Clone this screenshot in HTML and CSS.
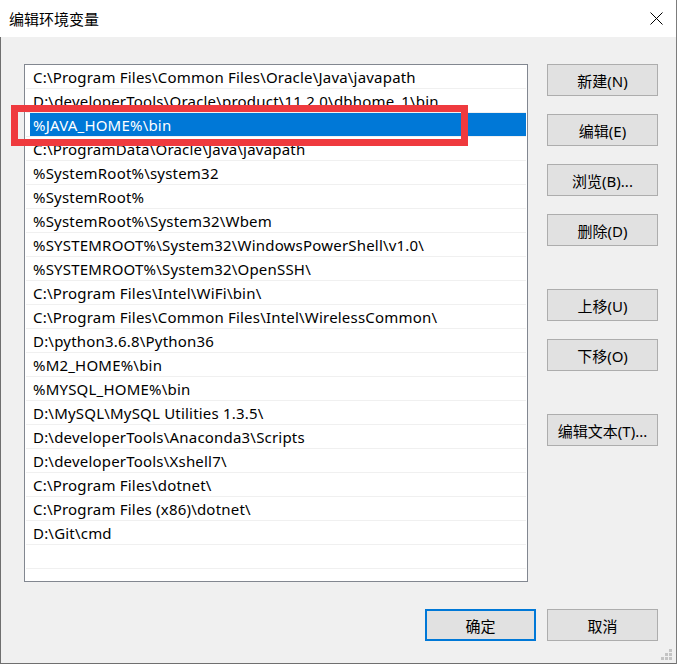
FILE: index.html
```html
<!DOCTYPE html>
<html lang="zh-CN">
<head>
    <meta charset="UTF-8">
    <meta name="viewport" content="width=device-width, initial-scale=1.0">
    <title>编辑环境变量</title>
    <link rel="stylesheet" href="styles.css">
</head>
<body>
    <div class="window">
        <div class="titlebar">
            <span class="title">编辑环境变量</span>
            <svg class="close" width="13" height="13" viewBox="0 0 13 13">
                <path d="M0.5 0.5 L12.5 12.5 M12.5 0.5 L0.5 12.5" stroke="#000" stroke-width="1" fill="none"/>
            </svg>
        </div>
        <div class="client">
            <div class="main">
                <div class="path-list">
                    <div class="row"><span class="label">C:\Program Files\Common Files\Oracle\Java\javapath</span></div>
                    <div class="row"><span class="label">D:\developerTools\Oracle\product\11.2.0\dbhome_1\bin</span></div>
                    <div class="row selected"><span class="label">%JAVA_HOME%\bin</span></div>
                    <div class="row"><span class="label">C:\ProgramData\Oracle\Java\javapath</span></div>
                    <div class="row"><span class="label">%SystemRoot%\system32</span></div>
                    <div class="row"><span class="label">%SystemRoot%</span></div>
                    <div class="row"><span class="label">%SystemRoot%\System32\Wbem</span></div>
                    <div class="row"><span class="label">%SYSTEMROOT%\System32\WindowsPowerShell\v1.0\</span></div>
                    <div class="row"><span class="label">%SYSTEMROOT%\System32\OpenSSH\</span></div>
                    <div class="row"><span class="label">C:\Program Files\Intel\WiFi\bin\</span></div>
                    <div class="row"><span class="label">C:\Program Files\Common Files\Intel\WirelessCommon\</span></div>
                    <div class="row"><span class="label">D:\python3.6.8\Python36</span></div>
                    <div class="row"><span class="label">%M2_HOME%\bin</span></div>
                    <div class="row"><span class="label">%MYSQL_HOME%\bin</span></div>
                    <div class="row"><span class="label">D:\MySQL\MySQL Utilities 1.3.5\</span></div>
                    <div class="row"><span class="label">D:\developerTools\Anaconda3\Scripts</span></div>
                    <div class="row"><span class="label">D:\developerTools\Xshell7\</span></div>
                    <div class="row"><span class="label">C:\Program Files\dotnet\</span></div>
                    <div class="row"><span class="label">C:\Program Files (x86)\dotnet\</span></div>
                    <div class="row"><span class="label">D:\Git\cmd</span></div>
                    <div class="row"><span class="label"></span></div>
                </div>
                <div class="side-buttons">
                    <button class="win-button">新建(N)</button>
                    <button class="win-button">编辑(E)</button>
                    <button class="win-button">浏览(B)...</button>
                    <button class="win-button">删除(D)</button>
                    <button class="win-button group-start">上移(U)</button>
                    <button class="win-button">下移(O)</button>
                    <button class="win-button group-start">编辑文本(T)...</button>
                </div>
            </div>
            <div class="footer">
                <button class="win-button default">确定</button>
                <button class="win-button">取消</button>
            </div>
            <svg class="grip" width="12" height="12" viewBox="0 0 12 12">
                <rect x="8" y="0" width="3" height="3" fill="#c4c4c4"/>
                <rect x="4" y="4" width="3" height="3" fill="#c4c4c4"/>
                <rect x="8" y="4" width="3" height="3" fill="#c4c4c4"/>
                <rect x="0" y="8" width="3" height="3" fill="#c4c4c4"/>
                <rect x="4" y="8" width="3" height="3" fill="#c4c4c4"/>
                <rect x="8" y="8" width="3" height="3" fill="#c4c4c4"/>
            </svg>
        </div>
        <div class="mark-box"></div>
    </div>
</body>
</html>
```

FILE: styles.css
```css
body {
    margin: 0;
    font-family: "Noto Sans", "Noto Sans CJK SC", sans-serif;
    font-size: 15px;
    color: #000;
    background-color: #fff;
}
.window {
    position: relative;
    width: 677px;
    height: 664px;
    box-sizing: border-box;
    border-right: 1px solid #7c7c7c;
    display: flex;
    flex-direction: column;
}
.titlebar {
    height: 37px;
    flex: none;
    background-color: #fff;
    display: flex;
    align-items: center;
    justify-content: space-between;
    padding: 0 13px 0 9px;
}
.title {
    font-family: "Noto Sans CJK SC", sans-serif;
    font-size: 15px;
    line-height: 1;
}
.client {
    position: relative;
    flex: 1;
    background-color: #f0f0f0;
    border-left: 1px solid #6f6f6f;
    border-bottom: 1px solid #6f6f6f;
    padding: 27px 18px 22px 23px;
    display: flex;
    flex-direction: column;
}
.main {
    display: flex;
    gap: 19px;
}
.path-list {
    width: 504px;
    height: 518px;
    box-sizing: border-box;
    border: 1px solid #828790;
    background-color: #fff;
    padding: 0 1px;
    overflow: hidden;
}
.row {
    height: 24px;
    box-sizing: border-box;
    border-bottom: 1px solid #f0f0f0;
    padding-left: 4px;
}
.label {
    display: block;
    height: 23px;
    line-height: 24px;
    padding-left: 3px;
    letter-spacing: 0.2px;
    white-space: nowrap;
}
.row.selected .label {
    background-color: #0078d7;
    color: #fff;
}
.side-buttons {
    display: flex;
    flex-direction: column;
    gap: 18px;
}
.win-button {
    width: 111px;
    height: 32px;
    box-sizing: border-box;
    background-color: #e1e1e1;
    border: 1px solid #adadad;
    border-radius: 0;
    padding: 0;
    font-family: "Noto Sans", "Noto Sans CJK SC", sans-serif;
    font-size: 15px;
    color: #000;
}
.win-button.group-start {
    margin-top: 25px;
}
.win-button.default {
    border: 2px solid #0078d7;
}
.footer {
    margin-top: 27px;
    display: flex;
    justify-content: flex-end;
    gap: 11px;
}
.grip {
    position: absolute;
    right: 3px;
    bottom: 2px;
}
.mark-box {
    position: absolute;
    left: 11px;
    top: 105px;
    width: 457px;
    height: 41px;
    box-sizing: border-box;
    border: 7px solid #ef3a3e;
}
```
